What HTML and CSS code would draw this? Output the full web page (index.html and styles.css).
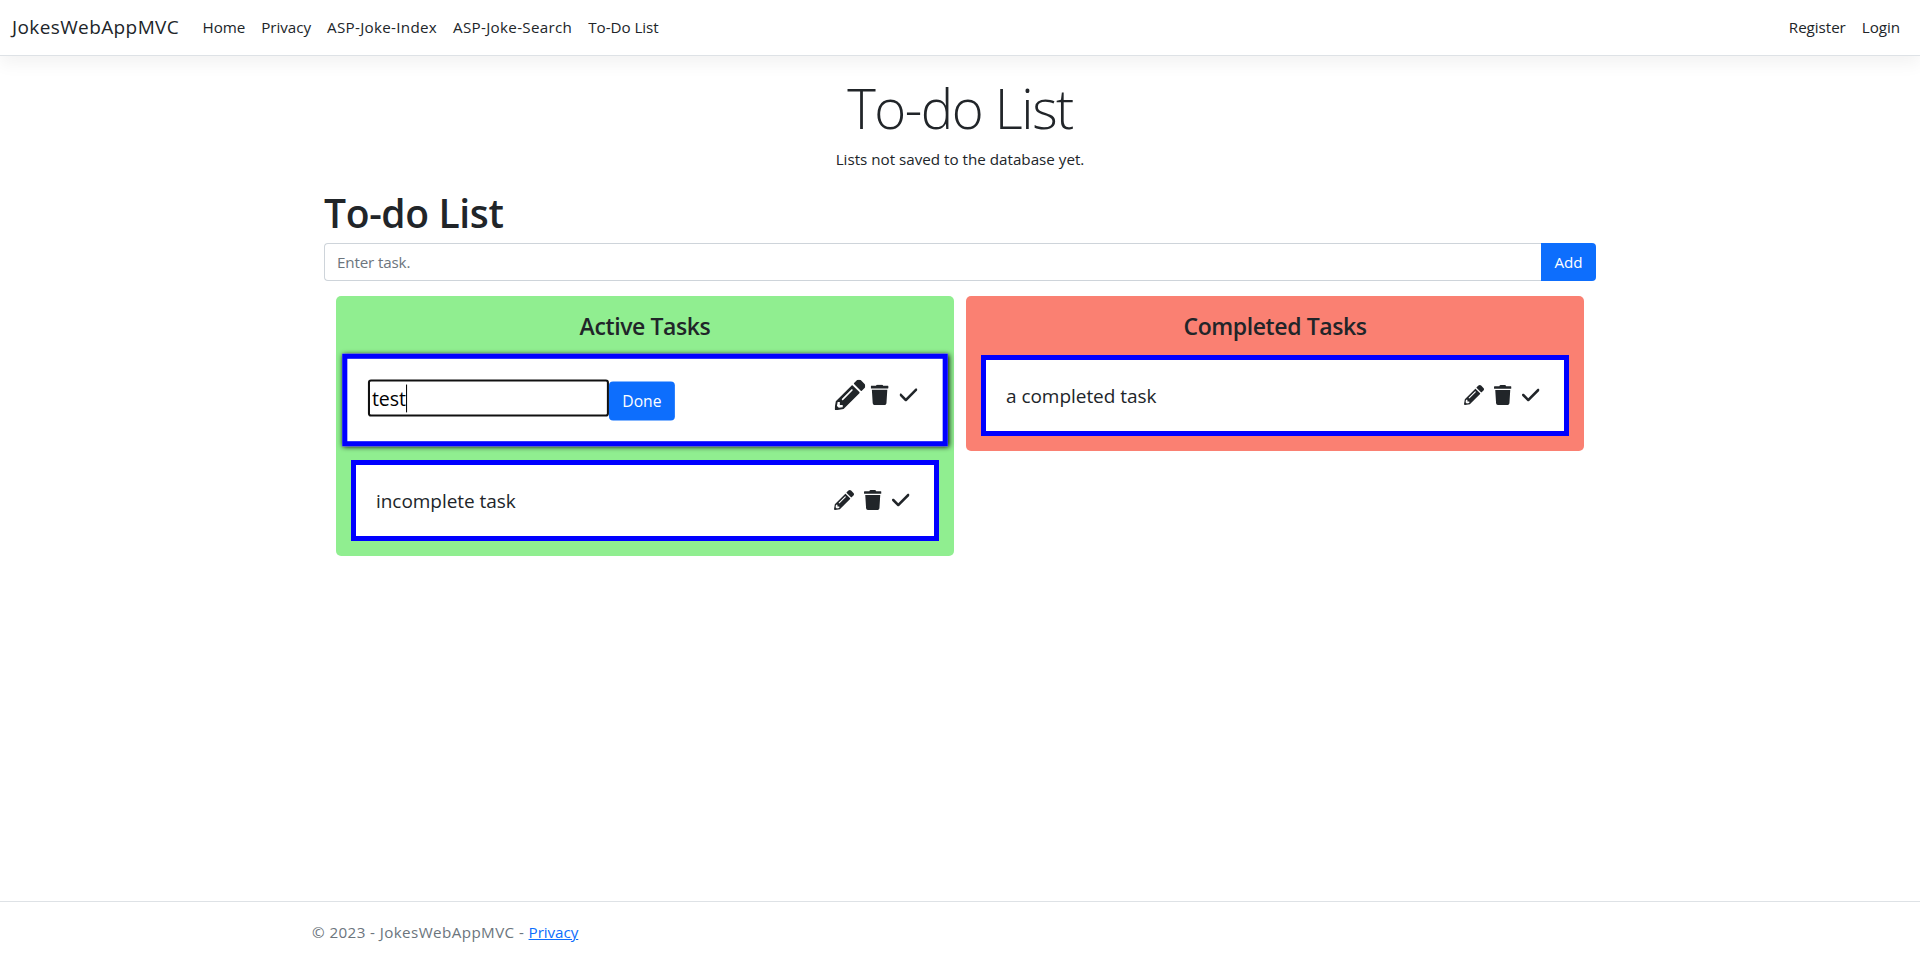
FILE: index.html
```html
<!DOCTYPE html>
<html lang="en">
<head>
<meta charset="utf-8">
<title>To-do List - JokesWebAppMVC</title>
<link rel="stylesheet" href="styles.css">
</head>
<body>
<svg class="defs" aria-hidden="true">
  <symbol id="pencil" viewBox="0 0 512 512"><path d="M497.9 142.1l-46.1 46.1c-4.7 4.7-12.3 4.7-17 0l-111-111c-4.7-4.7-4.7-12.3 0-17l46.1-46.1c18.7-18.7 49.1-18.7 67.9 0l60.1 60.1c18.8 18.7 18.8 49.1 0 67.9zM284.2 99.8L21.6 362.4.4 483.9c-2.9 16.4 11.4 30.6 27.8 27.8l121.5-21.3 262.6-262.6c4.7-4.7 4.7-12.3 0-17l-111-111c-4.8-4.7-12.4-4.7-17.1 0zM124.1 339.9c-5.5-5.5-5.5-14.3 0-19.8l154-154c5.5-5.5 14.3-5.5 19.8 0s5.5 14.3 0 19.8l-154 154c-5.5 5.5-14.3 5.5-19.8 0zM88 424h48v36.3l-64.5 11.3-31.1-31.1L51.7 376H88v48z"/></symbol>
  <symbol id="trash" viewBox="0 0 448 512"><path d="M432 32H312l-9.4-18.7A24 24 0 0 0 281.1 0H166.8a23.72 23.72 0 0 0-21.4 13.3L136 32H16A16 16 0 0 0 0 48v32a16 16 0 0 0 16 16h416a16 16 0 0 0 16-16V48a16 16 0 0 0-16-16zM32 128l21.2 339a48 48 0 0 0 47.9 45h245.8a48 48 0 0 0 47.9-45L416 128z"/></symbol>
  <symbol id="check" viewBox="0 0 448 512"><path d="M438.6 105.4c12.5 12.5 12.5 32.8 0 45.3l-256 256c-12.5 12.5-32.8 12.5-45.3 0l-128-128c-12.5-12.5-12.5-32.8 0-45.3s32.8-12.5 45.3 0L160 338.7 393.4 105.4c12.5-12.5 32.8-12.5 45.3 0z"/></symbol>
</svg>
<header class="navbar">
  <a class="brand">JokesWebAppMVC</a>
  <nav class="links">
    <a>Home</a><a>Privacy</a><a class="wide">ASP-Joke-Index</a><a class="wide">ASP-Joke-Search</a><a>To-Do List</a>
  </nav>
  <nav class="links account"><a>Register</a><a>Login</a></nav>
</header>
<main class="content">
  <h1 class="display">To-do List</h1>
  <p class="note">Lists not saved to the database yet.</p>
  <h1 class="title">To-do List</h1>
  <form class="add-form">
    <input class="task-input" type="text" placeholder="Enter task.">
    <button class="btn add" type="button">Add</button>
  </form>
  <div class="columns">
    <section class="panel active">
      <h4 class="panel-title">Active Tasks</h4>
      <div class="task editing">
        <div class="edit"><div class="edit-input">test<span class="caret"></span></div><button class="btn done" type="button">Done</button></div>
        <div class="icons"><svg class="icon big"><use href="#pencil"/></svg><svg class="icon narrow"><use href="#trash"/></svg><svg class="icon narrow"><use href="#check"/></svg></div>
      </div>
      <div class="task">
        <span class="task-text">incomplete task</span>
        <div class="icons"><svg class="icon"><use href="#pencil"/></svg><svg class="icon narrow"><use href="#trash"/></svg><svg class="icon narrow"><use href="#check"/></svg></div>
      </div>
    </section>
    <section class="panel completed">
      <h4 class="panel-title">Completed Tasks</h4>
      <div class="task">
        <span class="task-text">a completed task</span>
        <div class="icons"><svg class="icon"><use href="#pencil"/></svg><svg class="icon narrow"><use href="#trash"/></svg><svg class="icon narrow"><use href="#check"/></svg></div>
      </div>
    </section>
  </div>
</main>
<footer class="footer"><div class="footer-inner">© 2023 - JokesWebAppMVC - <a class="privacy">Privacy</a></div></footer>
</body>
</html>
```
FILE: styles.css
```css
* { box-sizing: border-box; }
body {
  margin: 0;
  width: 1920px;
  height: 962px;
  display: flex;
  flex-direction: column;
  background: #fff;
  color: #212529;
  font: 15.2px/24px "Open Sans", "Noto Sans", sans-serif;
  overflow: hidden;
}
h1, h4, p { margin: 0; }
.defs { position: absolute; width: 0; height: 0; }
.navbar {
  height: 56px;
  flex: none;
  display: flex;
  align-items: center;
  padding: 0 12px 2px;
  border-bottom: 1px solid #dee2e6;
  box-shadow: 0 8px 16px rgba(0, 0, 0, .05);
}
.brand { font-size: 19px; line-height: 30px; width: 182.5px; white-space: nowrap; letter-spacing: .39px; }
.links { display: flex; white-space: nowrap; }
.links a { padding: 0 8px; letter-spacing: -.05px; }
.links .wide { letter-spacing: .3px; }
.account { margin-left: auto; }
.content { width: 1272px; margin-left: 324px; flex: 1; padding-top: 19px; }
.display { font-size: 54.5px; line-height: 67px; font-weight: 300; text-align: center; letter-spacing: -1.5px; }
.note { text-align: center; margin-top: 5px; }
.title { font-size: 39px; line-height: 48px; font-weight: 600; margin-top: 18px; letter-spacing: -.35px; }
.add-form { display: flex; margin-top: 6px; height: 38px; }
.task-input {
  flex: 1;
  padding: 0 12px;
  border: 1px solid #ced4da;
  border-right: 0;
  border-radius: 4px 0 0 4px;
  font: inherit;
  letter-spacing: -.15px;
}
.task-input::placeholder { color: #6c757d; opacity: 1; }
.btn { border: 0; background: #0d6efd; color: #fff; font: inherit; padding: 0; height: 38px; }
.add { width: 55px; border-radius: 0 4px 4px 0; }
.columns { display: flex; align-items: flex-start; gap: 12px; padding: 15px 12px 0; }
.panel { width: 618px; border-radius: 5px; padding: 16px 15px 15px; display: flex; flex-direction: column; gap: 15px; }
.active { background: lightgreen; }
.completed { background: salmon; }
.panel-title { font-size: 23px; line-height: 28px; font-weight: 600; text-align: center; letter-spacing: -.4px; }
.task {
  height: 81px;
  border: 5px solid blue;
  background: #fff;
  padding: 20px 24.5px 0 20px;
  display: flex;
  justify-content: space-between;
}
.task-text { font-size: 19px; line-height: 30px; padding-top: 1px; letter-spacing: -.04px; }
.icons { display: flex; gap: 10.3px; padding-top: 5px; }
.icon { width: 20px; height: 20px; fill: #212529; }
.narrow { width: 17.5px; }
.big { transform: scale(1.5); }
.editing { height: 90px; transform: scale(1.03); box-shadow: 1px 1px 5px #000; }
.edit { display: flex; }
.edit-input {
  width: 234px;
  height: 36px;
  border: 2px solid #101010;
  border-radius: 3px;
  color: #000;
  font-size: 19px;
  line-height: 32px;
  padding: 1px 0 0 2px;
  display: flex;
  align-items: center;
  letter-spacing: -.15px;
}
.caret { width: 1px; height: 27px; background: #000; }
.done { width: 64px; border-radius: 4px; margin-top: 2px; }
.footer { height: 61px; flex: none; border-top: 1px solid #dee2e6; color: #6c757d; }
.footer-inner { padding: 18px 0 0 312px; letter-spacing: .4px; }
.privacy { color: #0d6efd; text-decoration: underline; letter-spacing: -.05px; }
```
